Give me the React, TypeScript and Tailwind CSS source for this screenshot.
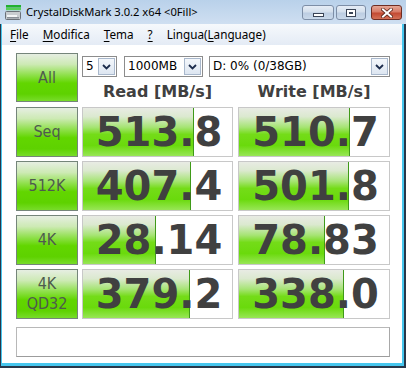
import React from "react";

interface Row {
  label: string[];
  read: string;
  write: string;
  readBar: number;
  writeBar: number;
}

const rows: Row[] = [
  { label: ["Seq"], read: "513.8", write: "510.7", readBar: 111, writeBar: 111 },
  { label: ["512K"], read: "407.4", write: "501.8", readBar: 108, writeBar: 110 },
  { label: ["4K"], read: "28.14", write: "78.83", readBar: 73, writeBar: 86 },
  { label: ["4K", "QD32"], read: "379.2", write: "338.0", readBar: 107, writeBar: 105 },
];

const TestButton = ({ lines, tall }: { lines: string[]; tall?: boolean }) => (
  <div
    className={`w-[62px] ${tall ? "h-[49px]" : "h-[50px]"} shrink-0 border border-[#75857a] bg-[linear-gradient(to_bottom,#e6eee2_0%,#cdeab4_22%,#8ee04a_45%,#62d600_62%,#5ed200_85%,#78dc2a_100%)] flex flex-col items-center justify-center text-[#4e5a4e] text-[16px] leading-[20px] font-['Liberation_Sans_Narrow','DejaVu_Sans_Condensed','Liberation_Sans',sans-serif]`}
  >
    {lines.map((l) => (
      <span key={l}>{l}</span>
    ))}
  </div>
);

const ScoreCell = ({ value, bar, width }: { value: string; bar: number; width: string }) => (
  <div className={`${width} h-[50px] relative border border-[#c8c8c8] bg-white flex items-center justify-center`}>
    <div
      className="absolute left-0 top-0 bottom-0 border-r border-[#3f9a18] bg-[linear-gradient(to_bottom,#e8ebe4_0%,#dbe9cf_18%,#a6e474_40%,#74dc18_55%,#6ada0c_78%,#98e656_100%)]"
      style={{ width: bar }}
    />
    <span className="relative text-[40px] leading-none font-bold text-[#404040] font-['DejaVu_Sans',sans-serif] pl-[3px]">
      {value}
    </span>
  </div>
);

const Select = ({ text, width }: { text: string; width: string }) => (
  <div className={`${width} h-[21px] border border-[#8c8c8c] bg-white flex items-stretch`}>
    <span className="flex-1 pl-[3px] text-[12px] leading-[19px] text-black font-['DejaVu_Sans',sans-serif] whitespace-nowrap overflow-hidden">
      {text}
    </span>
    <span className="w-[17px] m-[1px] border border-[#a9b8cc] bg-[linear-gradient(to_bottom,#f4f7fb,#dde6f1)] flex items-center justify-center">
      <svg width="9" height="6" viewBox="0 0 9 6">
        <path d="M1 1 L4.5 4.5 L8 1" fill="none" stroke="#1c2c4c" strokeWidth="1.8" />
      </svg>
    </span>
  </div>
);

const WinButton = ({ kind }: { kind: "min" | "max" | "close" }) => {
  if (kind === "close") {
    return (
      <div className="w-[31px] h-[15px] rounded-[3px] border border-[#6e2c22] bg-[linear-gradient(to_bottom,#e5a796_0%,#d77a66_45%,#c24a33_55%,#d47056_100%)] flex items-center justify-center">
        <svg width="12" height="10" viewBox="0 0 12 10">
          <path d="M2 1.5 L10 8.5 M10 1.5 L2 8.5" stroke="#5a2418" strokeWidth="3.6" strokeLinecap="square" />
          <path d="M2 1.5 L10 8.5 M10 1.5 L2 8.5" stroke="#ffffff" strokeWidth="2" strokeLinecap="square" />
        </svg>
      </div>
    );
  }
  return (
    <div
      className={`${kind === "min" ? "w-[32px]" : "w-[30px]"} h-[15px] rounded-[3px] border border-[#7d8ea6] bg-[linear-gradient(to_bottom,#e6edf6_0%,#d4dfec_45%,#bccde2_55%,#cad9ea_100%)] flex items-center justify-center`}
    >
      {kind === "min" ? (
        <div className="w-[11px] h-[4px] mt-[4px] border border-[#3a4456] bg-white" />
      ) : (
        <div className="w-[10px] h-[8px] border border-[#3a4456] bg-white flex items-center justify-center">
          <div className="w-[4px] h-[2px] border border-[#3a4456]" />
        </div>
      )}
    </div>
  );
};

const menu = [
  { pre: "", key: "F", post: "ile" },
  { pre: "", key: "M", post: "odifica" },
  { pre: "", key: "T", post: "ema" },
  { pre: "", key: "?", post: "" },
  { pre: "Lingua(", key: "L", post: "anguage)" },
];

export default function App() {
  return (
    <div className="w-[406px] h-[368px] bg-[#27374a] pl-px pr-[2px] pb-[2px] font-['Noto_Sans','DejaVu_Sans',sans-serif]">
      <div className="h-full flex flex-col bg-[#46c6ee] pl-px pr-[2px] pb-[3px]">
        {/* title bar */}
        <div className="h-[24px] shrink-0 -ml-[2px] -mr-[4px] pl-[5px] pr-[4px] flex items-center bg-[linear-gradient(to_bottom,#b9d1ea,#cfdff1)]">
          <svg width="17" height="16" viewBox="0 0 17 16" className="shrink-0 -mt-[1px]">
            <rect x="1" y="1" width="15" height="2.6" fill="#22b030" />
            <rect x="1" y="4" width="15" height="2.2" fill="#58d058" />
            <rect x="0.5" y="7.5" width="15" height="8" rx="1" fill="#c8ccd0" stroke="#6a7078" />
            <rect x="2" y="11" width="10" height="2" fill="#f2f4f6" />
            <rect x="2" y="13" width="12" height="1.5" fill="#8a9098" />
          </svg>
          <span className="ml-[4px] text-[11.2px] text-black whitespace-nowrap">CrystalDiskMark 3.0.2 x64 &lt;0Fill&gt;</span>
          <div className="ml-auto flex items-center gap-[2px] -mb-[1px]">
            <WinButton kind="min" />
            <WinButton kind="max" />
            <div className="w-px" />
            <WinButton kind="close" />
          </div>
        </div>
        {/* menu bar */}
        <div className="h-[21px] shrink-0 flex items-center gap-[14px] pl-[8px] bg-[linear-gradient(to_bottom,#f6f9fc,#e4ebf5)] text-[11.7px] text-black">
          {menu.map((m) => (
            <span key={m.key + m.post} className="whitespace-nowrap">
              {m.pre}
              <u className="underline-offset-2">{m.key}</u>
              {m.post}
            </span>
          ))}
        </div>
        {/* client */}
        <div className="flex-1 bg-white pl-[14px] pt-[8px] flex flex-col gap-[4px]">
          <div className="flex h-[50px]">
            <TestButton lines={["All"]} tall />
            <div className="ml-[4px] w-[308px] flex flex-col">
              <div className="flex mt-[3px]">
                <Select text="5" width="w-[35px]" />
                <div className="ml-[7px]">
                  <Select text="1000MB" width="w-[79px]" />
                </div>
                <div className="ml-[6px]">
                  <Select text="D: 0% (0/38GB)" width="w-[181px]" />
                </div>
              </div>
              <div className="flex flex-1 pt-[3px] items-center text-[16px] font-bold text-[#404040] font-['DejaVu_Sans',sans-serif]">
                <div className="w-[151px] text-center">Read [MB/s]</div>
                <div className="ml-[5px] w-[152px] text-center">Write [MB/s]</div>
              </div>
            </div>
          </div>
          {rows.map((r) => (
            <div key={r.read} className="flex">
              <TestButton lines={r.label} />
              <div className="ml-[4px]">
                <ScoreCell value={r.read} bar={r.readBar} width="w-[151px]" />
              </div>
              <div className="ml-[5px]">
                <ScoreCell value={r.write} bar={r.writeBar} width="w-[152px]" />
              </div>
            </div>
          ))}
          <div className="mt-[4px] w-[374px] h-[30px] border border-[#b8b8b8] border-b-[#9c9c9c] border-r-[#a8a8a8] bg-white" />
        </div>
      </div>
    </div>
  );
}
